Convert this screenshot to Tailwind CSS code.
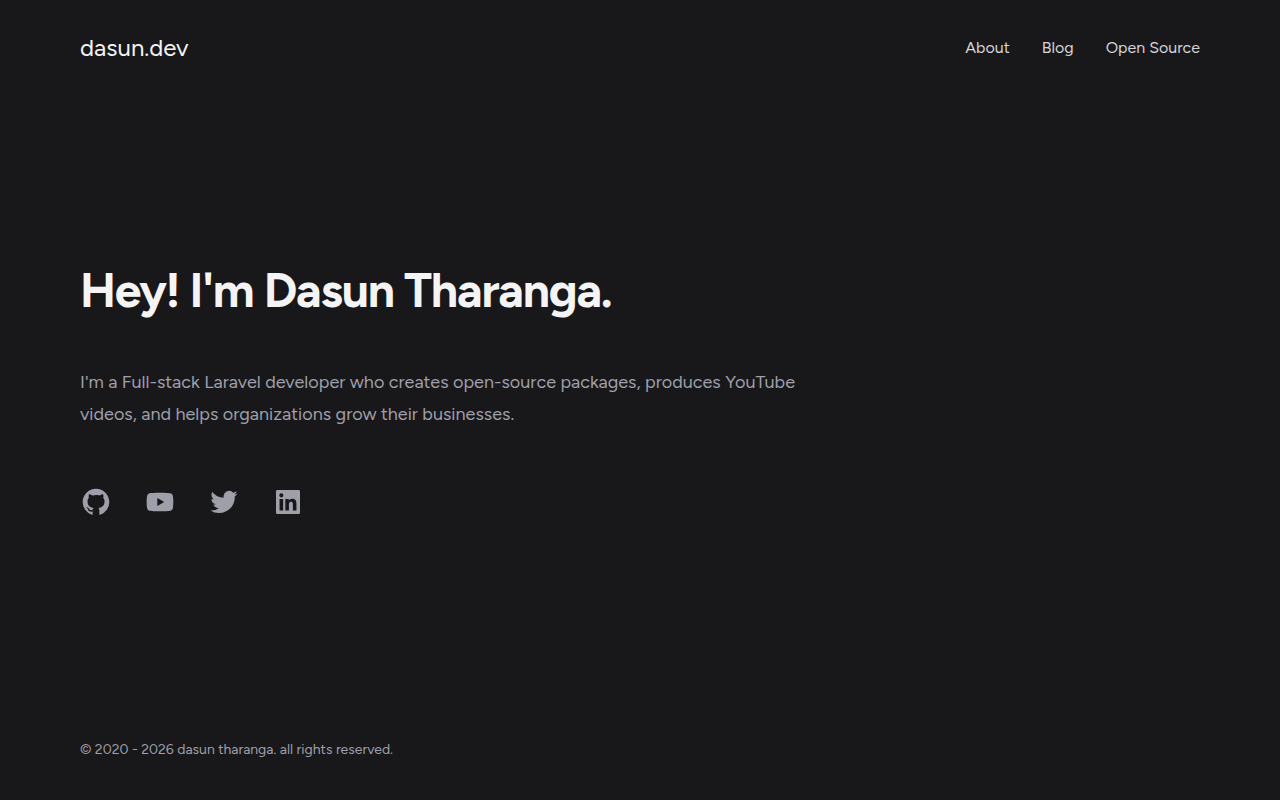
<!DOCTYPE html>
<html lang="en">
<head>
<meta charset="utf-8">
<meta name="viewport" content="width=device-width, initial-scale=1">
<title>dasun.dev</title>
<script src="https://cdn.jsdelivr.net/npm/@tailwindcss/browser@4"></script>
</head>
<body class="bg-[#18181b] font-['Figtree','Lato',sans-serif] antialiased">
<div class="flex min-h-screen flex-col px-6 md:px-20">
  <header class="flex h-24 items-center justify-between">
    <a href="#" class="text-2xl text-zinc-100">dasun.dev</a>
    <nav class="flex gap-8 text-base text-zinc-300">
      <a href="#">About</a>
      <a href="#">Blog</a>
      <a href="#">Open Source</a>
    </nav>
  </header>
  <main class="flex grow flex-col justify-center pb-4">
    <h1 class="text-5xl font-bold tracking-tight text-zinc-100">Hey! I'm Dasun Tharanga.</h1>
    <p class="mt-13 max-w-3xl text-lg leading-8 text-zinc-400">I'm a Full-stack Laravel developer who creates open-source packages, produces YouTube videos, and helps organizations grow their businesses.</p>
    <div class="mt-14 flex gap-8 text-zinc-400">
      <a href="#" aria-label="GitHub"><svg class="size-8" viewBox="0 0 24 24" fill="currentColor"><path d="M12 2C6.475 2 2 6.475 2 12a9.994 9.994 0 0 0 6.838 9.488c.5.087.687-.213.687-.476 0-.237-.013-1.024-.013-1.862-2.512.463-3.162-.612-3.362-1.175-.113-.288-.6-1.175-1.025-1.413-.35-.187-.85-.65-.013-.662.788-.013 1.35.725 1.538 1.025.9 1.512 2.338 1.087 2.912.825.088-.65.35-1.087.638-1.337-2.225-.25-4.55-1.113-4.55-4.938 0-1.088.387-1.987 1.025-2.688-.1-.25-.45-1.275.1-2.65 0 0 .837-.262 2.75 1.026a9.28 9.28 0 0 1 2.5-.338c.85 0 1.7.112 2.5.337 1.912-1.3 2.75-1.024 2.75-1.024.55 1.375.2 2.4.1 2.65.637.7 1.025 1.587 1.025 2.687 0 3.838-2.337 4.688-4.562 4.938.362.312.675.912.675 1.85 0 1.337-.013 2.412-.013 2.75 0 .262.188.574.688.474A10.016 10.016 0 0 0 22 12c0-5.525-4.475-10-10-10z"/></svg></a>
      <a href="#" aria-label="YouTube"><svg class="size-8" viewBox="0 0 24 24" fill="currentColor"><path d="M21.593 7.203a2.506 2.506 0 0 0-1.762-1.766C18.265 5.007 12 5 12 5s-6.264-.007-7.831.404a2.56 2.56 0 0 0-1.766 1.778c-.413 1.566-.417 4.814-.417 4.814s-.004 3.264.406 4.814c.23.857.905 1.534 1.763 1.765 1.582.43 7.83.437 7.83.437s6.265.007 7.831-.403a2.515 2.515 0 0 0 1.767-1.763c.414-1.565.417-4.812.417-4.812s.02-3.265-.407-4.831zM9.996 15.005l.005-6 5.207 3.005-5.212 2.995z"/></svg></a>
      <a href="#" aria-label="Twitter"><svg class="size-8" viewBox="0 0 24 24" fill="currentColor"><path d="M22.162 5.656a8.384 8.384 0 0 1-2.402.658A4.196 4.196 0 0 0 21.6 4c-.82.488-1.719.83-2.656 1.015a4.182 4.182 0 0 0-7.126 3.814 11.874 11.874 0 0 1-8.62-4.37 4.168 4.168 0 0 0-.566 2.103c0 1.45.738 2.731 1.86 3.481a4.168 4.168 0 0 1-1.894-.523v.052a4.185 4.185 0 0 0 3.355 4.101 4.21 4.21 0 0 1-1.89.072A4.185 4.185 0 0 0 7.97 16.65a8.394 8.394 0 0 1-6.191 1.732 11.83 11.83 0 0 0 6.41 1.88c7.693 0 11.9-6.373 11.9-11.9 0-.18-.005-.362-.013-.54a8.496 8.496 0 0 0 2.087-2.165z"/></svg></a>
      <a href="#" aria-label="LinkedIn"><svg class="size-8" viewBox="0 0 24 24" fill="currentColor"><path d="M20 3H4a1 1 0 0 0-1 1v16a1 1 0 0 0 1 1h16a1 1 0 0 0 1-1V4a1 1 0 0 0-1-1zM8.339 18.337H5.667v-8.59h2.672v8.59zM7.003 8.574a1.548 1.548 0 1 1 0-3.096 1.548 1.548 0 0 1 0 3.096zm11.335 9.763h-2.669V14.16c0-.996-.018-2.277-1.388-2.277-1.39 0-1.601 1.086-1.601 2.207v4.248h-2.667v-8.59h2.56v1.174h.037c.355-.675 1.227-1.387 2.524-1.387 2.704 0 3.203 1.778 3.203 4.092v4.71z"/></svg></a>
    </div>
  </main>
  <footer class="flex h-24 items-center pb-1 text-sm text-zinc-400">© 2020 - 2026 dasun tharanga. all rights reserved.</footer>
</div>
</body>
</html>
